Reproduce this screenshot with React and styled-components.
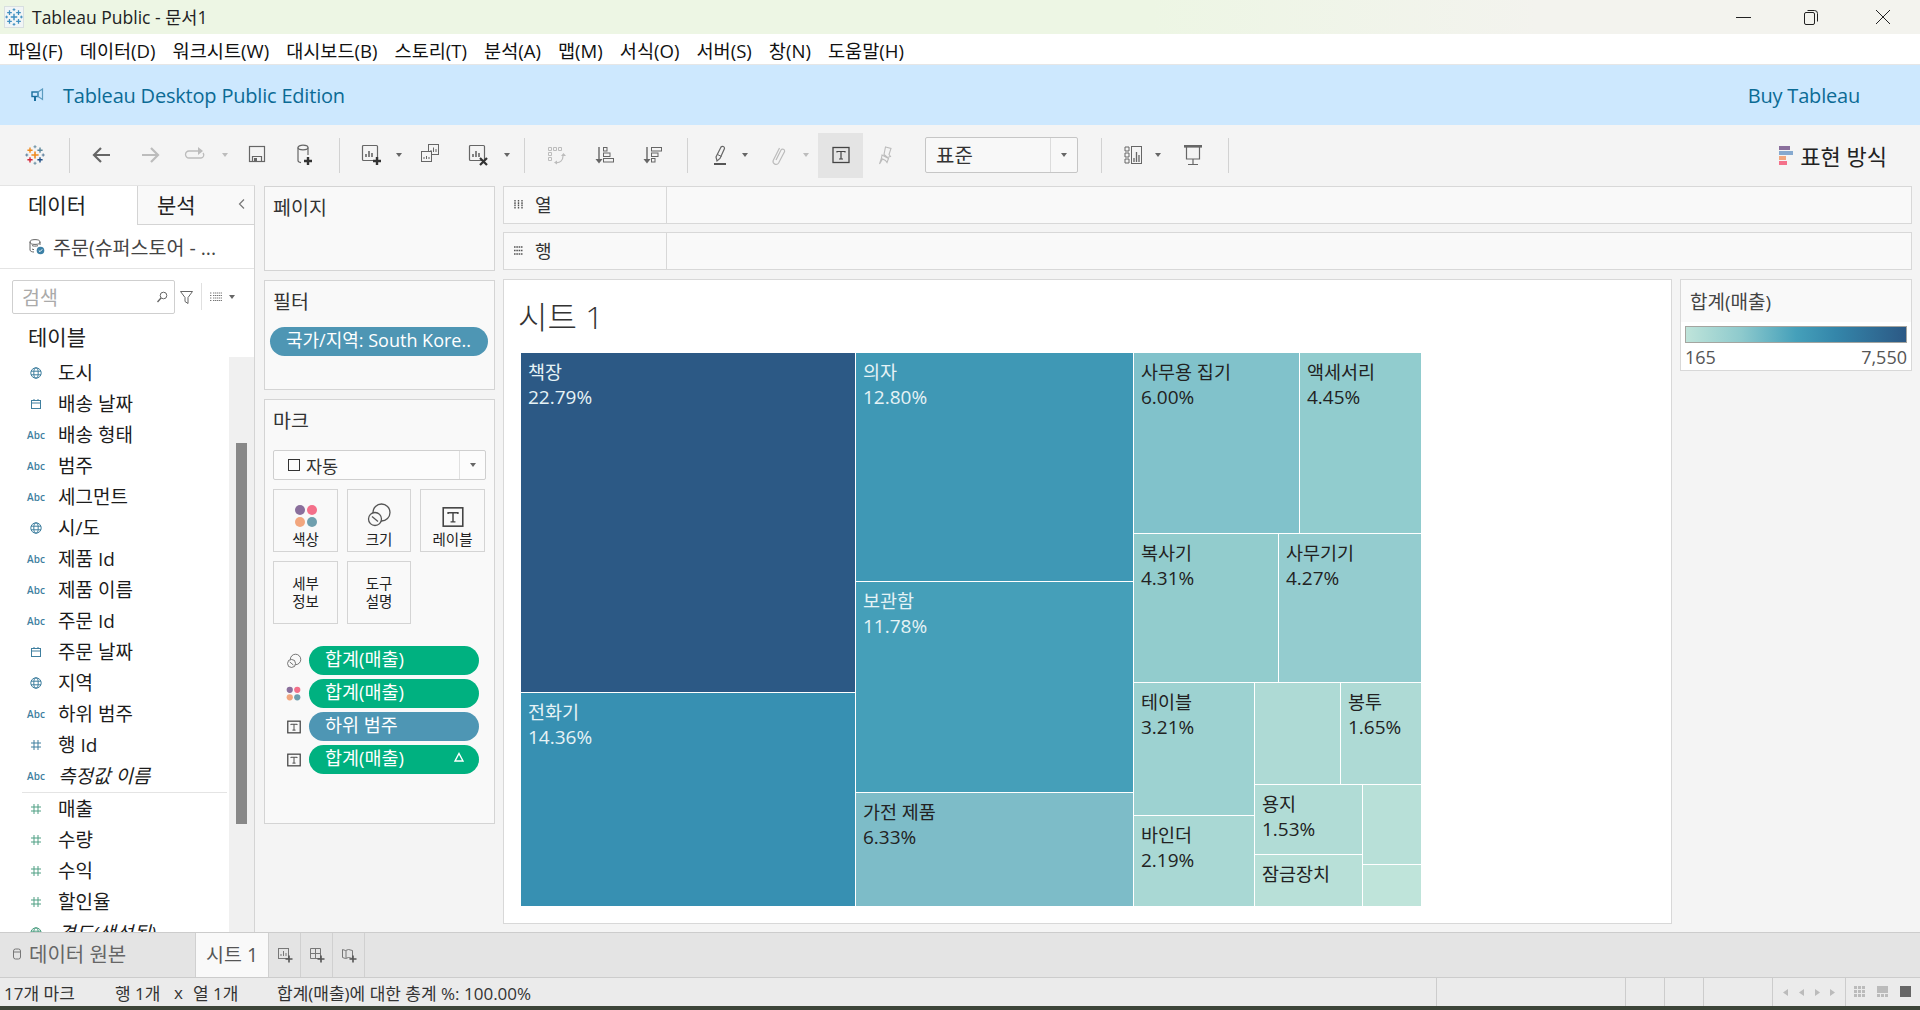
import React from "react";
import styled, { createGlobalStyle } from "styled-components";

const GlobalStyle = createGlobalStyle`
  * { box-sizing: border-box; }
  html, body { margin: 0; padding: 0; }
  body {
    font-family: "Open Sans", "Noto Sans CJK KR", sans-serif;
    color: #222;
    background: #f4f4f4;
    overflow: hidden;
  }
`;

const Page = styled.div`
  width: 1920px;
  height: 1010px;
  display: flex;
  flex-direction: column;
  overflow: hidden;
  white-space: nowrap;
`;

/* window chrome */
const TitleBar = styled.div`
  height: 34px;
  flex: none;
  display: flex;
  align-items: center;
  padding-left: 4px;
  background: linear-gradient(90deg, #edf6e4 0%, #edf6e4 60%, #f3f3ee 80%, #f3f3ee 100%);
`;
const TitleLogo = styled.div`
  width: 20px;
  height: 22px;
  display: flex;
  align-items: center;
  justify-content: center;
  background: #f1f5f6;
  border: 1px solid #d8dfe0;
`;
const TitleText = styled.div`
  margin-left: 8px;
  padding-bottom: 2px;
  font-size: 17.5px;
  color: #222;
`;
const WindowButtons = styled.div`
  margin-left: auto;
  display: flex;
  align-items: center;
  gap: 51px;
  padding-right: 29px;
  & > svg:last-child { margin-left: 5px; }
`;
const MenuBar = styled.div`
  height: 31px;
  flex: none;
  display: flex;
  align-items: center;
  padding-left: 8px;
  gap: 17px;
  background: #fff;
  border-bottom: 1px solid #e6e6e6;
  font-size: 18.6px;
  color: #111;
`;
const Banner = styled.div`
  height: 60px;
  flex: none;
  display: flex;
  align-items: center;
  padding: 0 60px 0 31px;
  background: #cde8fe;
  color: #0b6b95;
  font-size: 20px;
  letter-spacing: -0.2px;
`;
const BannerTitle = styled.div`
  margin-left: 18px;
`;
const BannerLink = styled.div`
  margin-left: auto;
`;

/* toolbar */
const Toolbar = styled.div`
  height: 60px;
  flex: none;
  display: flex;
  align-items: center;
  padding-right: 33px;
  background: #f4f4f4;
`;
const ToolSlot = styled.div`
  flex: none;
  width: ${(p) => p.$w || 24}px;
  height: ${(p) => (p.$active ? 45 : 24)}px;
  margin-left: ${(p) => p.$ml}px;
  display: flex;
  align-items: center;
  justify-content: center;
  background: ${(p) => (p.$active ? "#e4e4e4" : "transparent")};
`;
const ToolSep = styled.div`
  flex: none;
  width: 1px;
  height: 35px;
  margin-left: ${(p) => p.$ml}px;
  background: #d2d2d2;
`;
const Caret = styled.div`
  width: 0;
  height: 0;
  border-left: ${(p) => p.$s || 3.5}px solid transparent;
  border-right: ${(p) => p.$s || 3.5}px solid transparent;
  border-top: ${(p) => (p.$s || 3.5) + 1}px solid ${(p) => p.$c || "#666"};
`;
const Combo = styled.div`
  flex: none;
  width: 153px;
  height: 36px;
  margin-left: ${(p) => p.$ml}px;
  display: flex;
  align-items: center;
  background: #f8f8f8;
  border: 1px solid #c6c6c6;
  border-radius: 2px;
  font-size: 20px;
  color: #333;
`;
const ComboText = styled.div`
  flex: 1;
  padding: 0 0 2px 10px;
`;
const ComboArrow = styled.div`
  width: 27px;
  height: 100%;
  display: flex;
  align-items: center;
  justify-content: center;
  border-left: 1px solid #dcdcdc;
`;
const ShowMe = styled.div`
  margin-left: auto;
  display: flex;
  align-items: center;
  gap: 7px;
  font-size: 22px;
  color: #222;
`;
const ShowMeBars = styled.div`
  display: flex;
  flex-direction: column;
  gap: 1px;
`;
const ShowMeBar = styled.div`
  height: 4px;
  width: ${(p) => p.$w}px;
  background: ${(p) => p.$c};
`;

/* workspace */
const Workspace = styled.div`
  flex: 1;
  min-height: 0;
  display: flex;
`;
const DataPane = styled.div`
  width: 255px;
  flex: none;
  display: flex;
  flex-direction: column;
  background: #fff;
  border-right: 1px solid #d4d4d4;
  border-top: 1px solid #e4e4e4;
`;
const PaneTabs = styled.div`
  height: 39px;
  flex: none;
  display: flex;
  font-size: 21px;
`;
const PaneTab = styled.div`
  flex: none;
  width: 137px;
  padding: 0 0 3px 28px;
  display: flex;
  align-items: center;
`;
const PaneTabAlt = styled.div`
  flex: 1;
  display: flex;
  align-items: center;
  justify-content: space-between;
  padding: 0 6px 3px 19px;
  background: #f9f9f9;
  border-left: 1px solid #d4d4d4;
  border-bottom: 1px solid #d4d4d4;
`;
const SourceRow = styled.div`
  height: 44px;
  flex: none;
  display: flex;
  align-items: center;
  gap: 8px;
  padding-left: 28px;
  border-bottom: 1px solid #e4e4e4;
  font-size: 19.5px;
  color: #444;
`;
const SearchRow = styled.div`
  height: 45px;
  flex: none;
  display: flex;
  align-items: center;
  padding: 0 0 0 12px;
  margin-top: 5px;
`;
const SearchBox = styled.div`
  width: 163px;
  height: 34px;
  display: flex;
  align-items: center;
  justify-content: space-between;
  padding: 0 6px 0 9px;
  border: 1px solid #cfcfcf;
  border-radius: 2px;
  font-size: 19.5px;
  color: #aaa;
`;
const SearchTools = styled.div`
  display: flex;
  align-items: center;
  margin-left: 4px;
`;
const ThinSep = styled.div`
  width: 1px;
  height: 27px;
  margin: 0 7px 0 6px;
  background: #e0e0e0;
`;
const TablesHead = styled.div`
  height: 38px;
  flex: none;
  padding: 0 0 4px 28px;
  display: flex;
  align-items: center;
  font-size: 21px;
`;
const ListArea = styled.div`
  flex: 1;
  min-height: 0;
  display: flex;
  overflow: hidden;
`;
const FieldList = styled.div`
  flex: 1;
  min-width: 0;
  padding-left: 22px;
`;
const FieldRow = styled.div`
  height: 31px;
  display: flex;
  align-items: center;
  font-size: 19px;
  line-height: 24px;
  font-style: ${(p) => (p.$calc ? "italic" : "normal")};
  color: #1c1c1c;
`;
const FieldIcon = styled.div`
  width: 36px;
  flex: none;
  padding-right: 8px;
  display: flex;
  justify-content: center;
  font-style: normal;
  font-weight: 600;
  font-size: 10px;
  color: ${(p) => (p.$m ? "#4f9f83" : "#3f7f9f")};
`;
const FieldDivider = styled.div`
  height: 1px;
  margin: 1px 2px 0 0;
  background: #e4e4e4;
`;
const ScrollTrack = styled.div`
  width: 25px;
  flex: none;
  padding: 86px 7px 0;
  background: #f0f0f0;
`;
const ScrollThumb = styled.div`
  height: 381px;
  background: #888;
`;

const CardsColumn = styled.div`
  width: 248px;
  flex: none;
  display: flex;
  flex-direction: column;
  gap: 9px;
  padding: 1px 8px 0 9px;
`;
const Card = styled.div`
  height: ${(p) => p.$h}px;
  flex: none;
  padding: ${(p) => p.$pad || "0 6px"};
  background: #f9f9f9;
  border: 1px solid #d4d4d4;
`;
const CardTitle = styled.div`
  height: ${(p) => p.$h || 39}px;
  display: flex;
  align-items: center;
  padding: 0 10px 0 ${(p) => p.$pl || 2}px;
  font-size: 19.5px;
  color: #333;
`;
const Pill = styled.div`
  height: 29px;
  display: flex;
  align-items: center;
  justify-content: space-between;
  padding: 0 14px 6px 16px;
  border-radius: 15px;
  background: ${(p) => (p.$c === "green" ? "#00b180" : "#4e96b4")};
  color: #fff;
  font-size: 18.5px;
  flex: 1;
  min-width: 0;
`;
const FilterPill = styled(Pill)`
  flex: none;
  margin: 7px 0 0 -1px;
  padding: 0 10px 5px 16px;
  font-size: 18px;
`;
const MarkSelect = styled.div`
  height: 30px;
  margin: 12px 3px 0;
  display: flex;
  align-items: center;
  background: #fcfcfc;
  border: 1px solid #cfcfcf;
  border-radius: 2px;
  font-size: 17.5px;
  color: #333;
`;
const MarkType = styled.div`
  flex: 1;
  display: flex;
  align-items: center;
  gap: 6px;
  padding-left: 14px;
`;
const MarkBox = styled.div`
  width: 12px;
  height: 12px;
  border: 1px solid #333;
`;
const MarkArrow = styled.div`
  width: 26px;
  height: 100%;
  display: flex;
  align-items: center;
  justify-content: center;
  border-left: 1px solid #e0e0e0;
`;
const MarkGrid = styled.div`
  display: grid;
  grid-template-columns: 65px 64px 65px;
  grid-auto-rows: 63px;
  gap: 9px;
  margin: 9px 3px 0;
`;
const MarkButton = styled.div`
  display: flex;
  flex-direction: column;
  align-items: center;
  justify-content: ${(p) => (p.$text ? "center" : "flex-end")};
  padding-bottom: ${(p) => (p.$text ? 0 : 2)}px;
  gap: ${(p) => (p.$text ? 0 : 3)}px;
  border: 1px solid #d4d4d4;
  font-size: 14.5px;
  line-height: 18px;
  color: #222;
  text-align: center;
`;
const MarkPills = styled.div`
  display: flex;
  flex-direction: column;
  gap: 4px;
  margin-top: 22px;
`;
const MarkPillRow = styled.div`
  display: flex;
  align-items: center;
  padding-right: 10px;
`;
const MarkPillIcon = styled.div`
  width: 39px;
  flex: none;
  padding-left: 8px;
  display: flex;
  justify-content: center;
`;

const MainColumn = styled.div`
  flex: 1;
  min-width: 0;
  display: flex;
  flex-direction: column;
  gap: 8px;
  padding: 1px 8px 8px 0;
`;
const Shelf = styled.div`
  height: ${(p) => p.$h}px;
  flex: none;
  display: flex;
  background: #f9f9f9;
  border: 1px solid #d8d8d8;
`;
const ShelfLabel = styled.div`
  width: 163px;
  display: flex;
  align-items: center;
  gap: 11px;
  padding: 0 0 2px 9px;
  border-right: 1px solid #d8d8d8;
  font-size: 18px;
  color: #333;
`;
const ViewRow = styled.div`
  flex: 1;
  min-height: 0;
  display: flex;
  gap: 8px;
  margin-top: 1px;
`;
const ViewCard = styled.div`
  width: 1169px;
  flex: none;
  padding: 0 0 0 17px;
  background: #fff;
  border: 1px solid #d8d8d8;
`;
const SheetTitle = styled.div`
  height: 73px;
  display: flex;
  align-items: center;
  padding-bottom: 4px;
  margin-left: -3px;
  font-size: 32px;
  font-weight: 300;
  color: #333;
`;
const Split = styled.div`
  display: flex;
  flex-direction: ${(p) => p.$dir};
  gap: 1px;
  flex: ${(p) => (p.$size ? `0 0 ${p.$size}px` : "none")};
  width: ${(p) => (p.$w ? `${p.$w}px` : "auto")};
  height: ${(p) => (p.$h ? `${p.$h}px` : "auto")};
`;
const Tile = styled.div`
  flex: 0 0 ${(p) => p.$size}px;
  padding: 5px 0 0 7px;
  background: ${(p) => p.$bg};
  color: ${(p) => (p.$light ? "#e6f3f6" : "#222")};
  overflow: hidden;
`;
const TileName = styled.div`
  font-size: 18.5px;
  line-height: 27px;
`;
const TilePct = styled.div`
  font-size: 19px;
  line-height: 25px;
`;
const Legend = styled.div`
  flex: 1;
  height: 92px;
  background: #fff;
  border: 1px solid #d8d8d8;
`;
const LegendTitle = styled.div`
  height: 42px;
  padding-left: 9px;
  display: flex;
  align-items: center;
  background: #f9f9f9;
  font-size: 19px;
  color: #444;
`;
const LegendBar = styled.div`
  height: 17px;
  margin: 4px 4px 0;
  border: 1px solid #a5a5a0;
  background: linear-gradient(90deg, #bfe4da 0%, #8ecacd 25%, #45a0ba 50%, #3486aa 68%, #2c5985 100%);
`;
const LegendScale = styled.div`
  display: flex;
  justify-content: space-between;
  padding: 2px 4px 0 4px;
  font-size: 18px;
  line-height: 24px;
  color: #555;
`;

/* bottom */
const TabBar = styled.div`
  height: 45px;
  flex: none;
  display: flex;
  background: #e4e4e4;
  border-top: 1px solid #ccc;
`;
const SourceTab = styled.div`
  width: 196px;
  flex: none;
  display: flex;
  align-items: center;
  gap: 7px;
  padding: 0 0 3px 12px;
  border-right: 1px solid #d0d0d0;
  font-size: 20px;
  color: #666;
`;
const SheetTab = styled.div`
  width: 72px;
  flex: none;
  display: flex;
  align-items: center;
  justify-content: center;
  padding-bottom: 3px;
  background: #f9f9f9;
  font-size: 19.5px;
  color: #555;
`;
const TabAction = styled.div`
  width: 32px;
  flex: none;
  display: flex;
  align-items: center;
  justify-content: center;
  border-left: 1px solid #d0d0d0;
  &:last-child { width: 33px; border-right: 1px solid #d0d0d0; }
`;
const StatusBar = styled.div`
  height: 29px;
  flex: none;
  display: flex;
  align-items: center;
  background: #ebebeb;
  border-top: 1px solid #ccc;
  font-size: 17px;
  color: #333;
`;
const StatusText = styled.div`
  flex: none;
  width: ${(p) => p.$w}px;
  padding-left: ${(p) => p.$pl || 0}px;
`;
const StatusCell = styled.div`
  flex: none;
  width: ${(p) => p.$w}px;
  height: 100%;
  display: flex;
  align-items: center;
  justify-content: center;
  gap: ${(p) => p.$gap || 0}px;
  border-left: 1px solid #ccc;
`;
const BottomStrip = styled.div`
  height: 4px;
  flex: none;
  background: #3c4438;
`;

/* icons */
const Svg = ({ s = 24, w, h, children, ...rest }) => (
  <svg width={w || s} height={h || s} viewBox={`0 0 ${w || s} ${h || s}`} fill="none" {...rest}>
    {children}
  </svg>
);

const Plus = ({ x, y, r, c, t = 1.4 }) => (
  <path d={`M${x - r} ${y}H${x + r}M${x} ${y - r}V${y + r}`} stroke={c} strokeWidth={t} />
);

const TableauLogo = ({ mono }) => (
  <Svg s={20}>
    <Plus x={10} y={10} r={3.6} c={mono || "#ee8a1e"} t={1.6} />
    <Plus x={5} y={5.2} r={2.6} c={mono || "#ee8a1e"} />
    <Plus x={15} y={5.2} r={2.6} c={mono || "#5b879b"} />
    <Plus x={5} y={14.8} r={2.6} c={mono || "#d3283a"} />
    <Plus x={15} y={14.8} r={2.6} c={mono || "#1f4f86"} />
    <Plus x={10} y={1.8} r={1.5} c={mono || "#6d93a6"} t={1.1} />
    <Plus x={10} y={18.2} r={1.5} c={mono || "#6d93a6"} t={1.1} />
    <Plus x={1.8} y={10} r={1.5} c={mono || "#5c7f9c"} t={1.1} />
    <Plus x={18.2} y={10} r={1.5} c={mono || "#5c7f9c"} t={1.1} />
  </Svg>
);

const g = "#666";
const lg = "#bcbcbc";
const bk = "#333";

const Arrow = ({ dir, c }) => (
  <Svg>
    <path
      d={dir === "l" ? "M20 12H5M11 5l-7 7 7 7" : "M4 12h15M13 5l7 7-7 7"}
      stroke={c}
      strokeWidth="2.2"
    />
  </Svg>
);
const RedoIcon = () => (
  <Svg>
    <path d="M14 8H5a3 3 0 0 0 0 7h12a3 3 0 0 0 2-5" stroke={lg} strokeWidth="1.3" />
    <path d="M14 4v8l5-4z" fill={lg} />
  </Svg>
);
const SaveIcon = () => (
  <Svg>
    <rect x="4.5" y="3.5" width="15" height="15" stroke={g} strokeWidth="1.2" />
    <path d="M7.5 18.5v-5h9v5" stroke={g} strokeWidth="1.2" />
    <rect x="9" y="15" width="3" height="3.5" fill={g} />
  </Svg>
);
const BoldPlus = ({ x, y }) => <Plus x={x} y={y} r={4} c={bk} t={2.4} />;
const DataPlusIcon = () => (
  <Svg>
    <ellipse cx="10" cy="4.5" rx="5" ry="2.3" stroke={g} strokeWidth="1.2" />
    <path d="M5 4.5v13c0 1 1.4 1.8 3 2.1M15 4.5V12" stroke={g} strokeWidth="1.2" />
    <BoldPlus x={15} y={18} />
  </Svg>
);
const BarsIn = ({ x, y }) => (
  <path d={`M${x} ${y}v-3M${x + 3} ${y}v-6M${x + 6} ${y}v-4`} stroke={g} strokeWidth="1.6" />
);
const SheetPlusIcon = () => (
  <Svg>
    <rect x="4.5" y="2.5" width="15" height="15" rx="1" stroke={g} strokeWidth="1.2" />
    <BarsIn x={8} y={14} />
    <BoldPlus x={19} y={18} />
  </Svg>
);
const DupIcon = () => (
  <Svg>
    <rect x="10.5" y="1.5" width="10" height="10" stroke={g} />
    <path d="M13 9V7M15.5 9V4.5M18 9V6" stroke={g} />
    <rect x="3.5" y="8.5" width="10" height="10" fill="#f4f4f4" stroke={g} />
    <path d="M6 16v-2M8.5 16v-3M11 16v-2" stroke={g} />
  </Svg>
);
const ClearIcon = () => (
  <Svg>
    <rect x="4.5" y="2.5" width="15" height="15" rx="1" stroke={g} strokeWidth="1.2" />
    <BarsIn x={8} y={14} />
    <path d="M15 15l7 7M22 15l-7 7" stroke={bk} strokeWidth="2.2" />
  </Svg>
);
const SwapIcon = () => (
  <Svg>
    <path
      d="M4.5 4.5h3v3h-3zM9.5 4.5h3v3h-3zM14.5 4.5h3v3h-3zM4.5 9.5h3v3h-3zM4.5 14.5h3v3h-3z"
      stroke={lg}
    />
    <path d="M12 19.5c4 .5 7-2 7-6.5" stroke={lg} strokeWidth="1.2" />
    <path d="M17 13l2.500-3 2.500 3zM13 17.500l-3 2 3 2z" fill={lg} />
  </Svg>
);
const SortIcon = ({ flip }) => (
  <Svg>
    <path d="M6 4v13" stroke={g} strokeWidth="1.4" />
    <path d="M2.500 16h7L6 20.500z" fill={g} />
    {flip ? (
      <>
        <rect x="10.5" y="4.5" width="10" height="3.5" stroke={g} />
        <rect x="10.5" y="10" width="6.5" height="3.5" stroke={g} />
        <rect x="10.5" y="15.5" width="3.5" height="3.5" stroke={g} />
      </>
    ) : (
      <>
        <rect x="10.5" y="4.5" width="3.5" height="3.5" stroke={g} />
        <rect x="10.5" y="10" width="6.5" height="3.5" stroke={g} />
        <rect x="10.5" y="15.5" width="10" height="3.5" stroke={g} />
      </>
    )}
  </Svg>
);
const HighlightIcon = () => (
  <Svg>
    <path d="M8 14l5-10a2 2 0 0 1 3.500 1.500L12 15.500l-3 2.500z" stroke={g} strokeWidth="1.2" />
    <path d="M9.500 11.500l4 2" stroke={g} />
    <rect x="6" y="20" width="12" height="2" fill="#555" />
  </Svg>
);
const ClipIcon = () => (
  <Svg>
    <path
      d="M10 17l5-10a2 2 0 0 1 3.600 1.500l-6 11.500a3 3 0 0 1-5.400-2.500L13.500 5"
      stroke={lg}
      strokeWidth="1.2"
    />
  </Svg>
);
const TBox = ({ s = 18, c = "#444", t = 1.3 }) => (
  <svg width={s} height={s} viewBox="0 0 18 18" fill="none">
    <rect x="1" y="1.500" width="16" height="15" stroke={c} strokeWidth={t} />
    <path d="M5 6.500V5.500h8v1M9 5.500v7.500M7 13h4" stroke={c} strokeWidth="1.2" />
  </svg>
);
const PinIcon = () => (
  <Svg>
    <path
      d="M13.500 4l5.500 1.500-2 6 1.500 2-3 1-3.500-3zM10 12l6.500 3.500-1.500 4-1.500-2-3-1.500-3 5 2-6z"
      stroke={lg}
      strokeWidth="1.1"
    />
  </Svg>
);
const ShowMeIcon = () => (
  <Svg>
    <path d="M4 4h4v4H4zM4 10h4v4H4zM4 16h4v4H4z" stroke={g} />
    <rect x="10.5" y="3.5" width="10" height="17" stroke={g} />
    <path d="M13 19v-4M15.5 19V9M18 19v-7" stroke={g} strokeWidth="1.3" />
  </Svg>
);
const PresentIcon = () => (
  <Svg>
    <rect x="3" y="2" width="18" height="2.6" fill={g} />
    <path d="M5.5 4v12h13V4M12 16v5M7 21.5h10" stroke={g} strokeWidth="1.2" />
  </Svg>
);
const Megaphone = () => (
  <Svg s={14}>
    <rect x="1" y="4" width="6" height="4.500" stroke="#1a6f9e" strokeWidth="1.4" />
    <path d="M7 4l4.500-3v10.500L7 8.500z" stroke="#5c9cc0" strokeWidth="1.2" />
    <rect x="3" y="8.500" width="2" height="4.500" fill="#1a6f9e" />
  </Svg>
);
const SizeIcon = ({ s = 26 }) => (
  <svg width={s} height={s} viewBox="0 0 26 26" fill="none">
    <circle cx="15.5" cy="10.5" r="8.5" stroke="#555" strokeWidth="1.3" />
    <circle cx="9" cy="17" r="6.5" fill="#f9f9f9" stroke="#555" strokeWidth="1.3" />
    <path d="M6 14.5l6 5" stroke="#555" strokeWidth="1.3" />
  </svg>
);
const ColorDots = ({ s = 24 }) => (
  <svg width={s} height={s} viewBox="0 0 24 24">
    <circle cx="6" cy="6" r="5" fill="#8a6f9c" />
    <circle cx="18" cy="6" r="5" fill="#f4708a" />
    <circle cx="6" cy="18" r="5" fill="#f2a67e" />
    <circle cx="18" cy="18" r="5" fill="#6f9fae" />
  </svg>
);
const Globe = ({ c = "#3f7f9f" }) => (
  <Svg s={12}>
    <circle cx="6" cy="6" r="5.2" stroke={c} />
    <ellipse cx="6" cy="6" rx="2.2" ry="5.2" stroke={c} />
    <path d="M1 4.2h10M1 7.8h10" stroke={c} />
  </Svg>
);
const Calendar = () => (
  <Svg s={12}>
    <rect x="1.5" y="2.5" width="9" height="8" stroke="#3f7f9f" />
    <path d="M1.5 5h9M4 1v2M8 1v2" stroke="#3f7f9f" />
  </Svg>
);
const Hash = ({ c }) => (
  <Svg s={12}>
    <path d="M4 1v10M8 1v10M1 4h10M1 8h10" stroke={c} />
  </Svg>
);
const SourceIcon = () => (
  <Svg s={17}>
    <ellipse cx="7" cy="4" rx="5" ry="2.4" stroke="#666" />
    <path d="M2 4v8c0 1.2 2 2 4 2M12 4v3M4 7.5c1 .8 4 .8 6 .2M4 11c.6.4 1.2.5 2 .6" stroke="#666" />
    <circle cx="12.5" cy="12.5" r="3.8" fill="#3c80a6" />
    <path d="M10.8 12.5l1.2 1.2 2.2-2.4" stroke="#fff" />
  </Svg>
);
const SearchGlass = () => (
  <Svg s={12}>
    <circle cx="7.5" cy="4.5" r="3.3" stroke="#666" />
    <path d="M5 7l-3.5 4" stroke="#666" strokeWidth="1.3" />
  </Svg>
);
const Funnel = () => (
  <Svg s={16}>
    <path d="M1.5 2.5h12L9 8.5v6l-3-2v-4z" stroke="#666" />
  </Svg>
);
const ListIcon = () => (
  <Svg s={14}>
    <path
      d="M1 3h2M4 3h9M1 5.5h2M4 5.5h9M1 8h2M4 8h9M1 10.5h2M4 10.5h9"
      stroke="#777"
      strokeDasharray="1.400 .6"
    />
  </Svg>
);
const TabDb = () => (
  <Svg w={10} h={14}>
    <rect x="1.5" y="2" width="7" height="10" rx="2" stroke="#777" />
    <path d="M1.5 5h7" stroke="#777" />
  </Svg>
);
const AddSheet = () => (
  <Svg s={16}>
    <rect x="1.5" y="1.5" width="10" height="10" stroke="#777" />
    <path d="M4 9V7M6.5 9V4M9 9V6" stroke="#777" />
    <Plus x={12} y={12} r={3.5} c="#555" t={1.6} />
  </Svg>
);
const AddDash = () => (
  <Svg s={16}>
    <path d="M1.5 1.5h10v10h-10zM1.5 6.5h10M6.5 1.5v10" stroke="#777" />
    <Plus x={12} y={12} r={3.5} c="#555" t={1.6} />
  </Svg>
);
const AddStory = () => (
  <Svg s={16}>
    <path d="M1.5 2.5l3 1 3-1 4 1v8l-4-1-3 1-3-1zM5 3.5v8" stroke="#777" />
    <Plus x={12} y={12} r={3.5} c="#555" t={1.6} />
  </Svg>
);
const NavIcon = ({ d }) => (
  <Svg s={11}>
    <path d={d} fill="#bbb" />
  </Svg>
);
const TriUp = () => (
  <Svg s={12}>
    <path d="M6 2.5L10 10H2z" stroke="#fff" strokeWidth="1.4" />
  </Svg>
);
const SmallView = ({ kind }) => (
  <Svg s={12}>
    {kind === "grid" && (
      <path
        d="M0 0h3v3H0zM4 0h3v3H4zM8 0h3v3H8zM0 4h3v3H0zM4 4h3v3H4zM8 4h3v3H8zM0 8h3v3H0zM4 8h3v3H4zM8 8h3v3H8z"
        fill="#bbb"
      />
    )}
    {kind === "strip" && <path d="M0 0h11v7H0zM0 8h3v3H0zM4 8h3v3H4zM8 8h3v3H8z" fill="#bbb" />}
    {kind === "full" && <rect width="11" height="11" fill="#666" />}
  </Svg>
);

const menus = ["파일(F)", "데이터(D)", "워크시트(W)", "대시보드(B)", "스토리(T)", "분석(A)", "맵(M)", "서식(O)", "서버(S)", "창(N)", "도움말(H)"];

const toolbar = [
  { ml: 23, icon: <TableauLogo /> },
  { ml: 22, sep: true },
  { ml: 20, icon: <Arrow dir="l" c={g} /> },
  { ml: 24, icon: <Arrow dir="r" c={lg} /> },
  { ml: 22, icon: <RedoIcon /> },
  { ml: 13, caret: lg },
  { ml: 16, icon: <SaveIcon /> },
  { ml: 24, icon: <DataPlusIcon /> },
  { ml: 22, sep: true },
  { ml: 18, icon: <SheetPlusIcon /> },
  { ml: 13, caret: g },
  { ml: 15, icon: <DupIcon /> },
  { ml: 23, icon: <ClearIcon /> },
  { ml: 14, caret: g },
  { ml: 13, sep: true },
  { ml: 19, icon: <SwapIcon /> },
  { ml: 25, icon: <SortIcon /> },
  { ml: 24, icon: <SortIcon flip /> },
  { ml: 22, sep: true },
  { ml: 20, icon: <HighlightIcon /> },
  { ml: 9, caret: g },
  { ml: 17, icon: <ClipIcon /> },
  { ml: 12, caret: lg },
  { ml: 8, w: 45, active: true, icon: <TBox /> },
  { ml: 9, icon: <PinIcon /> },
];

const fields = [
  { t: "도시", k: "globe" },
  { t: "배송 날짜", k: "cal" },
  { t: "배송 형태", k: "abc" },
  { t: "범주", k: "abc" },
  { t: "세그먼트", k: "abc" },
  { t: "시/도", k: "globe" },
  { t: "제품 Id", k: "abc" },
  { t: "제품 이름", k: "abc" },
  { t: "주문 Id", k: "abc" },
  { t: "주문 날짜", k: "cal" },
  { t: "지역", k: "globe" },
  { t: "하위 범주", k: "abc" },
  { t: "행 Id", k: "hash" },
  { t: "측정값 이름", k: "abc", calc: true },
  { divider: true },
  { t: "매출", k: "hash", m: true },
  { t: "수량", k: "hash", m: true },
  { t: "수익", k: "hash", m: true },
  { t: "할인율", k: "hash", m: true },
  { t: "경도(생성됨)", k: "globe", m: true, calc: true },
];

const FieldGlyph = ({ k, m }) => {
  const c = m ? "#4f9f83" : "#3f7f9f";
  if (k === "globe") return <Globe c={c} />;
  if (k === "cal") return <Calendar />;
  if (k === "hash") return <Hash c={c} />;
  return "Abc";
};

const Leaf = ({ size, bg, light, name, pct }) => (
  <Tile $size={size} $bg={bg} $light={light}>
    {name && <TileName>{name}</TileName>}
    {pct && <TilePct>{pct}</TilePct>}
  </Tile>
);

const Treemap = () => (
  <Split $dir="row" $w={900} $h={553}>
    <Split $dir="column" $size={334}>
      <Leaf size={339} bg="#2c5985" light name="책장" pct="22.79%" />
      <Leaf size={213} bg="#3790b2" light name="전화기" pct="14.36%" />
    </Split>
    <Split $dir="column" $size={277}>
      <Leaf size={228} bg="#3f98b5" light name="의자" pct="12.80%" />
      <Leaf size={210} bg="#459fb9" light name="보관함" pct="11.78%" />
      <Leaf size={113} bg="#7dbcc8" name="가전 제품" pct="6.33%" />
    </Split>
    <Split $dir="column" $size={287}>
      <Split $dir="row" $size={180}>
        <Leaf size={165} bg="#81c2cb" name="사무용 집기" pct="6.00%" />
        <Leaf size={121} bg="#91ccce" name="액세서리" pct="4.45%" />
      </Split>
      <Split $dir="row" $size={148}>
        <Leaf size={144} bg="#92cccd" name="복사기" pct="4.31%" />
        <Leaf size={142} bg="#94cccf" name="사무기기" pct="4.27%" />
      </Split>
      <Split $dir="row" $size={223}>
        <Split $dir="column" $size={120}>
          <Leaf size={132} bg="#9dd2d1" name="테이블" pct="3.21%" />
          <Leaf size={90} bg="#a9d8d4" name="바인더" pct="2.19%" />
        </Split>
        <Split $dir="column" $size={166}>
          <Split $dir="row" $size={101}>
            <Leaf size={85} bg="#aedad5" />
            <Leaf size={80} bg="#aedad5" name="봉투" pct="1.65%" />
          </Split>
          <Split $dir="row" $size={121}>
            <Split $dir="column" $size={107}>
              <Leaf size={69} bg="#b1dcd6" name="용지" pct="1.53%" />
              <Leaf size={51} bg="#b8e0d8" name="잠금장치" />
            </Split>
            <Split $dir="column" $size={58}>
              <Leaf size={79} bg="#b8e0d8" />
              <Leaf size={41} bg="#bfe4da" />
            </Split>
          </Split>
        </Split>
      </Split>
    </Split>
  </Split>
);

export default function App() {
  return (
    <>
      <GlobalStyle />
      <Page>
        <TitleBar>
          <TitleLogo>
            <TableauLogo mono="#3f8fc0" />
          </TitleLogo>
          <TitleText>Tableau Public - 문서1</TitleText>
          <WindowButtons>
            <Svg s={16}>
              <path d="M0 8.5h15" stroke="#222" />
            </Svg>
            <Svg s={16}>
              <rect x="1.5" y="3.5" width="10" height="12" rx="1.5" stroke="#222" />
              <path d="M4.500 1.500h7a3 3 0 0 1 3 3v8" stroke="#222" />
            </Svg>
            <Svg s={16}>
              <path d="M1 1l14 14M15 1L1 15" stroke="#222" />
            </Svg>
          </WindowButtons>
        </TitleBar>

        <MenuBar>
          {menus.map((m) => (
            <div key={m}>{m}</div>
          ))}
        </MenuBar>

        <Banner>
          <Megaphone />
          <BannerTitle>Tableau Desktop Public Edition</BannerTitle>
          <BannerLink>Buy Tableau</BannerLink>
        </Banner>

        <Toolbar>
          {toolbar.map((t, i) =>
            t.sep ? (
              <ToolSep key={i} $ml={t.ml} />
            ) : t.caret ? (
              <ToolSlot key={i} $ml={t.ml} $w={8}>
                <Caret $c={t.caret} $s={3} />
              </ToolSlot>
            ) : (
              <ToolSlot key={i} $ml={t.ml} $w={t.w} $active={t.active}>
                {t.icon}
              </ToolSlot>
            )
          )}
          <Combo $ml={29}>
            <ComboText>표준</ComboText>
            <ComboArrow>
              <Caret />
            </ComboArrow>
          </Combo>
          <ToolSep $ml={23} />
          <ToolSlot $ml={19}>
            <ShowMeIcon />
          </ToolSlot>
          <ToolSlot $ml={9} $w={8}>
            <Caret $s={3} />
          </ToolSlot>
          <ToolSlot $ml={19}>
            <PresentIcon />
          </ToolSlot>
          <ToolSep $ml={23} />
          <ShowMe>
            <ShowMeBars>
              <ShowMeBar $w={11} $c="#8a6f9c" />
              <ShowMeBar $w={14} $c="#86a9cf" />
              <ShowMeBar $w={7} $c="#f2a67e" />
              <ShowMeBar $w={8} $c="#f4708a" />
            </ShowMeBars>
            표현 방식
          </ShowMe>
        </Toolbar>

        <Workspace>
          <DataPane>
            <PaneTabs>
              <PaneTab>데이터</PaneTab>
              <PaneTabAlt>
                분석
                <Svg s={12}>
                  <path d="M8 1.5L3.5 6 8 10.5" stroke="#777" strokeWidth="1.2" />
                </Svg>
              </PaneTabAlt>
            </PaneTabs>
            <SourceRow>
              <SourceIcon />
              주문(슈퍼스토어 - ...
            </SourceRow>
            <SearchRow>
              <SearchBox>
                검색
                <SearchGlass />
              </SearchBox>
              <SearchTools>
                <Funnel />
                <ThinSep />
                <ListIcon />
                <ToolSlot $ml={5} $w={8}>
                  <Caret $s={3} />
                </ToolSlot>
              </SearchTools>
            </SearchRow>
            <TablesHead>테이블</TablesHead>
            <ListArea>
              <FieldList>
                {fields.map((f, i) =>
                  f.divider ? (
                    <FieldDivider key={i} />
                  ) : (
                    <FieldRow key={i} $calc={f.calc}>
                      <FieldIcon $m={f.m}>
                        <FieldGlyph k={f.k} m={f.m} />
                      </FieldIcon>
                      {f.t}
                    </FieldRow>
                  )
                )}
              </FieldList>
              <ScrollTrack>
                <ScrollThumb />
              </ScrollTrack>
            </ListArea>
          </DataPane>

          <CardsColumn>
            <Card $h={85}>
              <CardTitle>페이지</CardTitle>
            </Card>
            <Card $h={110}>
              <CardTitle>필터</CardTitle>
              <FilterPill>국가/지역: South Kore..</FilterPill>
            </Card>
            <Card $h={425} $pad="0 5px">
              <CardTitle $h={38} $pl={3}>마크</CardTitle>
              <MarkSelect>
                <MarkType>
                  <MarkBox />
                  자동
                </MarkType>
                <MarkArrow>
                  <Caret />
                </MarkArrow>
              </MarkSelect>
              <MarkGrid>
                <MarkButton>
                  <ColorDots />
                  색상
                </MarkButton>
                <MarkButton>
                  <SizeIcon />
                  크기
                </MarkButton>
                <MarkButton>
                  <TBox s={22} />
                  레이블
                </MarkButton>
                <MarkButton $text>
                  세부
                  <br />
                  정보
                </MarkButton>
                <MarkButton $text>
                  도구
                  <br />
                  설명
                </MarkButton>
              </MarkGrid>
              <MarkPills>
                <MarkPillRow>
                  <MarkPillIcon>
                    <SizeIcon s={16} />
                  </MarkPillIcon>
                  <Pill $c="green">합계(매출)</Pill>
                </MarkPillRow>
                <MarkPillRow>
                  <MarkPillIcon>
                    <ColorDots s={15} />
                  </MarkPillIcon>
                  <Pill $c="green">합계(매출)</Pill>
                </MarkPillRow>
                <MarkPillRow>
                  <MarkPillIcon>
                    <TBox s={14} t={1.6} />
                  </MarkPillIcon>
                  <Pill $c="blue">하위 범주</Pill>
                </MarkPillRow>
                <MarkPillRow>
                  <MarkPillIcon>
                    <TBox s={14} t={1.6} />
                  </MarkPillIcon>
                  <Pill $c="green">
                    합계(매출)
                    <TriUp />
                  </Pill>
                </MarkPillRow>
              </MarkPills>
            </Card>
          </CardsColumn>

          <MainColumn>
            <Shelf $h={38}>
              <ShelfLabel>
                <Svg s={11}>
                  <path d="M2 1v9M5.5 1v9M9 1v9" stroke="#555" strokeWidth="1.4" strokeDasharray="1.6 .7" />
                </Svg>
                열
              </ShelfLabel>
            </Shelf>
            <Shelf $h={38}>
              <ShelfLabel>
                <Svg s={11}>
                  <path d="M1 2h9M1 5.5h9M1 9h9" stroke="#555" strokeWidth="1.4" strokeDasharray="1.6 .7" />
                </Svg>
                행
              </ShelfLabel>
            </Shelf>
            <ViewRow>
              <ViewCard>
                <SheetTitle>시트 1</SheetTitle>
                <Treemap />
              </ViewCard>
              <Legend>
                <LegendTitle>합계(매출)</LegendTitle>
                <LegendBar />
                <LegendScale>
                  <span>165</span>
                  <span>7,550</span>
                </LegendScale>
              </Legend>
            </ViewRow>
          </MainColumn>
        </Workspace>

        <TabBar>
          <SourceTab>
            <TabDb />
            데이터 원본
          </SourceTab>
          <SheetTab>시트 1</SheetTab>
          <TabAction>
            <AddSheet />
          </TabAction>
          <TabAction>
            <AddDash />
          </TabAction>
          <TabAction>
            <AddStory />
          </TabAction>
        </TabBar>

        <StatusBar>
          <StatusText $w={115} $pl={4}>17개 마크</StatusText>
          <StatusText $w={59}>행 1개</StatusText>
          <StatusText $w={19}>x</StatusText>
          <StatusText $w={84}>열 1개</StatusText>
          <StatusText $w={1159}>합계(매출)에 대한 총계 %: 100.00%</StatusText>
          <StatusCell $w={189} />
          <StatusCell $w={39} />
          <StatusCell $w={39} />
          <StatusCell $w={69} />
          <StatusCell $w={73} $gap={5}>
            <NavIcon d="M1 2v7M8 2v7L3 5.5z" />
            <NavIcon d="M8 2v7L3 5.5z" />
            <NavIcon d="M3 2v7l5-3.5z" />
            <NavIcon d="M2 2v7l5-3.5zM9 2v7" />
          </StatusCell>
          <StatusCell $w={75} $gap={11}>
            <SmallView kind="grid" />
            <SmallView kind="strip" />
            <SmallView kind="full" />
          </StatusCell>
        </StatusBar>
        <BottomStrip />
      </Page>
    </>
  );
}
